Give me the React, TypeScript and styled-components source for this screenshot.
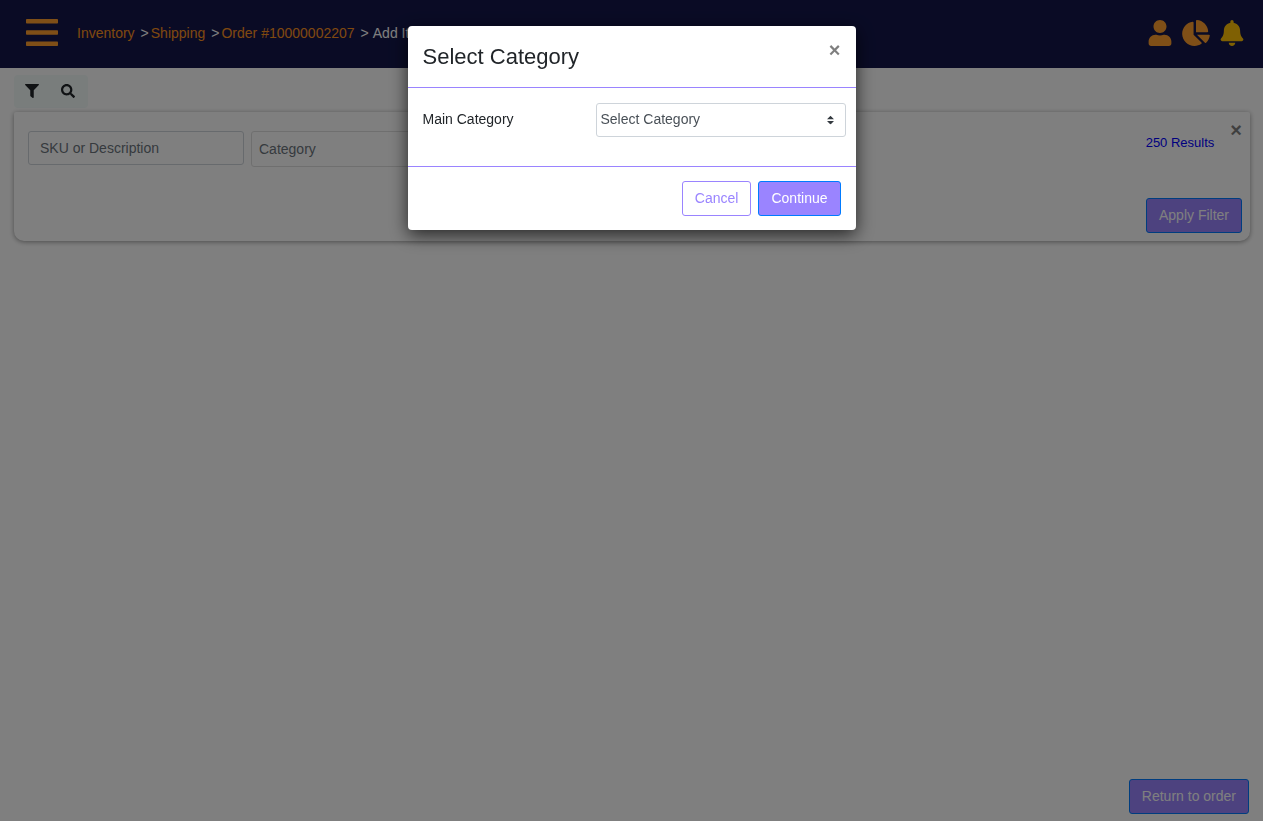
import React from 'react';
import styled, { createGlobalStyle, css } from 'styled-components';
import { FaBell, FaChartPie, FaFilter, FaSearch, FaUser } from 'react-icons/fa';

const GlobalStyle = createGlobalStyle`
  *, *::before, *::after { box-sizing: border-box; }
  body {
    margin: 0;
    background: #fff;
    color: #212529;
    font-family: "Liberation Sans", Arial, sans-serif;
    font-size: 14px;
    line-height: 21px;
  }
  button, input, select { font: inherit; }
`;

const Page = styled.div`
  display: flex;
  flex-direction: column;
  min-height: 100vh;
`;

const Header = styled.header`
  display: flex;
  align-items: center;
  min-height: 68px;
  padding: 0 17px 2px 26px;
  background: #14174b;
`;

const IconButton = styled.button<{ $tone?: string }>`
  display: flex;
  padding: 0;
  border: 0;
  background: none;
  color: ${(p) => p.$tone ?? '#ff9f2f'};
  cursor: pointer;
  svg { display: block; width: 28px; height: 26px; }
`;

const MenuButton = styled(IconButton)`
  svg { width: 32px; height: 28px; }
`;

const Breadcrumb = styled.nav`
  flex: 1;
  margin-left: 19px;
  ol {
    display: flex;
    margin: 0;
    padding: 0;
    list-style: none;
    white-space: nowrap;
  }
  li + li::before {
    content: ">";
    padding: 0 2px 0 6px;
    color: #fff;
  }
`;

const Crumb = styled.a`
  color: #ff931f;
  text-decoration: none;
`;

const Current = styled.span`
  padding-left: 2px;
  color: #fff;
`;

const HeaderActions = styled.div`
  display: flex;
  gap: 8px;
`;

const Main = styled.main`
  flex: 1;
  display: flex;
  flex-direction: column;
  padding: 7px 13px 7px 14px;
`;

const Toolbar = styled.div`
  display: flex;
  align-self: flex-start;
  margin-bottom: 4px;
  padding-right: 2px;
  border-radius: 4px;
  background: #f2faf9;
`;

const ToolButton = styled.button`
  display: flex;
  align-items: center;
  justify-content: center;
  width: 36px;
  height: 33px;
  padding: 0 0 2px;
  border: 0;
  background: none;
  color: #212529;
  cursor: pointer;
`;

const FilterCard = styled.section`
  display: flex;
  gap: 16px;
  justify-content: space-between;
  min-height: 129px;
  padding: 8px 8px 8px 14px;
  border-radius: 2px 2px 10px 10px;
  background: #fff;
  box-shadow: 0 1px 5px rgba(0, 0, 0, 0.4);
`;

const Fields = styled.div`
  display: flex;
  align-items: flex-start;
  gap: 7px;
  padding-top: 11px;
`;

const control = css`
  border: 1px solid #ced4da;
  border-radius: 3px;
  background: #fff;
  color: #495057;
`;

const TextInput = styled.input`
  ${control}
  width: 216px;
  height: 34px;
  padding: 0 11px;
  &::placeholder { color: #6c757d; opacity: 1; }
`;

const SelectBox = styled.div<{ $width: number }>`
  position: relative;
  width: ${(p) => p.$width}px;
  svg {
    position: absolute;
    top: 50%;
    right: 12px;
    width: 7px;
    height: 9px;
    transform: translateY(-50%);
    pointer-events: none;
  }
`;

const Select = styled.select<{ $tall?: boolean }>`
  ${control}
  display: block;
  width: 100%;
  height: ${(p) => (p.$tall ? 36 : 34)}px;
  padding: ${(p) => (p.$tall ? '0 24px 0 7px' : '0 24px 2px 4px')};
  appearance: none;
  ${(p) => p.$tall && 'border-color: #dfdfdf; color: #6c757d;'}
`;

const CardSide = styled.div`
  display: flex;
  flex-direction: column;
  align-items: flex-end;
  justify-content: space-between;
`;

const Summary = styled.div`
  display: flex;
  align-items: flex-start;
  gap: 16px;
`;

const Results = styled.span`
  padding-top: 12px;
  color: #00f;
  font-size: 13px;
`;

const Close = styled.button`
  padding: 0;
  border: 0;
  background: none;
  color: #000;
  font-size: 20px;
  font-weight: 700;
  line-height: 21px;
  opacity: 0.5;
  cursor: pointer;
`;

const Button = styled.button<{ $outline?: boolean }>`
  height: 35px;
  padding: 0 12px 1px;
  border: 1px solid ${(p) => (p.$outline ? '#9a84ff' : '#007bff')};
  border-radius: 3px;
  background: ${(p) => (p.$outline ? '#fff' : '#9a84ff')};
  color: ${(p) => (p.$outline ? '#9a84ff' : '#fff')};
  cursor: pointer;
`;

const PageFooter = styled.footer`
  display: flex;
  justify-content: flex-end;
  margin-top: auto;
  padding-right: 1px;
`;

const Backdrop = styled.div`
  position: fixed;
  inset: 0;
  display: flex;
  align-items: flex-start;
  justify-content: center;
  padding: 26px 16px;
  background: rgba(0, 0, 0, 0.5);
`;

const Dialog = styled.div`
  width: 100%;
  max-width: 448px;
  border-radius: 4px;
  background: #fff;
  box-shadow: 0 5px 18px rgba(0, 0, 0, 0.7);
`;

const DialogHeader = styled.div`
  display: flex;
  align-items: flex-start;
  justify-content: space-between;
  padding: 14px 15px 13px;
  border-bottom: 1px solid #9a84ff;
`;

const DialogTitle = styled.h2`
  margin: 0;
  font-size: 22px;
  font-weight: 400;
  line-height: 34px;
`;

const DialogBody = styled.div`
  display: flex;
  align-items: flex-start;
  justify-content: space-between;
  padding: 15px 10px 29px 15px;
`;

const Label = styled.label`
  padding-top: 6px;
`;

const DialogFooter = styled.div`
  display: flex;
  justify-content: flex-end;
  gap: 7px;
  padding: 14px 15px;
  border-top: 1px solid #9a84ff;
`;

const Caret = () => (
  <svg viewBox="0 0 4 5" aria-hidden="true">
    <path fill="#343a40" d="M2 0L0 2h4zm0 5L0 3h4z" />
  </svg>
);

export default function App() {
  return (
    <>
      <GlobalStyle />
      <Page>
        <Header>
          <MenuButton aria-label="Menu">
            <svg viewBox="0 0 32 28" fill="currentColor">
              <rect y="0" width="32" height="4.5" rx="0.8" />
              <rect y="11.2" width="32" height="4.5" rx="0.8" />
              <rect y="22.5" width="32" height="4.5" rx="0.8" />
            </svg>
          </MenuButton>
          <Breadcrumb aria-label="Breadcrumb">
            <ol>
              <li><Crumb href="#inventory">Inventory</Crumb></li>
              <li><Crumb href="#shipping">Shipping</Crumb></li>
              <li><Crumb href="#order">Order #10000002207</Crumb></li>
              <li><Current>Add Items</Current></li>
            </ol>
          </Breadcrumb>
          <HeaderActions>
            <IconButton aria-label="Account"><FaUser /></IconButton>
            <IconButton aria-label="Reports"><FaChartPie /></IconButton>
            <IconButton aria-label="Notifications" $tone="#ffc107"><FaBell /></IconButton>
          </HeaderActions>
        </Header>
        <Main>
          <Toolbar>
            <ToolButton aria-label="Filter"><FaFilter size={14} /></ToolButton>
            <ToolButton aria-label="Search"><FaSearch size={14} /></ToolButton>
          </Toolbar>
          <FilterCard>
            <Fields>
              <TextInput aria-label="SKU or Description" placeholder="SKU or Description" />
              <SelectBox $width={216}>
                <Select $tall aria-label="Category"><option>Category</option></Select>
                <Caret />
              </SelectBox>
            </Fields>
            <CardSide>
              <Summary>
                <Results>250 Results</Results>
                <Close aria-label="Close filters">×</Close>
              </Summary>
              <Button>Apply Filter</Button>
            </CardSide>
          </FilterCard>
          <PageFooter>
            <Button>Return to order</Button>
          </PageFooter>
        </Main>
      </Page>
      <Backdrop>
        <Dialog role="dialog" aria-modal="true" aria-labelledby="dialog-title">
          <DialogHeader>
            <DialogTitle id="dialog-title">Select Category</DialogTitle>
            <Close aria-label="Close">×</Close>
          </DialogHeader>
          <DialogBody>
            <Label htmlFor="main-category">Main Category</Label>
            <SelectBox $width={250}>
              <Select id="main-category"><option>Select Category</option></Select>
              <Caret />
            </SelectBox>
          </DialogBody>
          <DialogFooter>
            <Button $outline>Cancel</Button>
            <Button>Continue</Button>
          </DialogFooter>
        </Dialog>
      </Backdrop>
    </>
  );
}
